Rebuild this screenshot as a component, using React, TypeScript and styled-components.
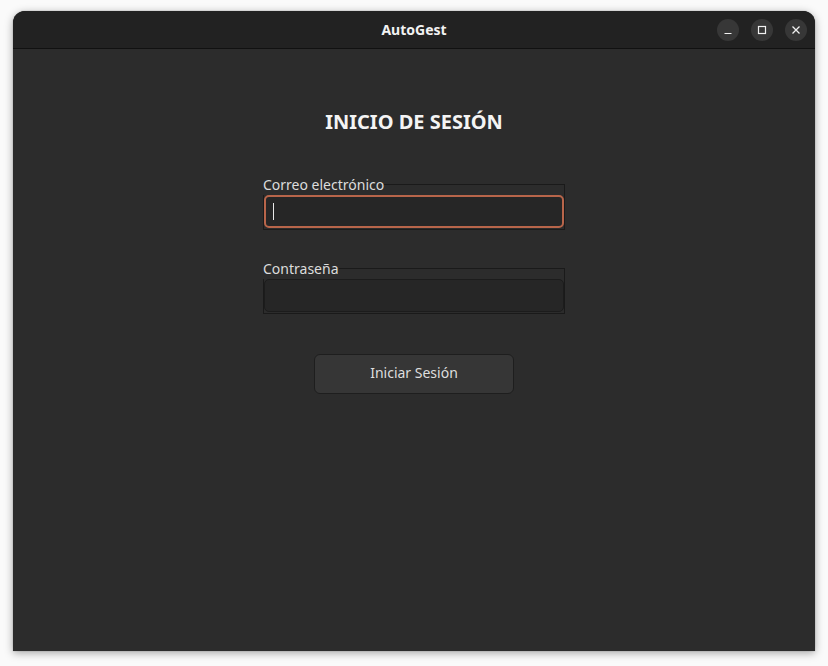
import React from 'react';
import styled, { createGlobalStyle } from 'styled-components';

const GlobalStyle = createGlobalStyle`
  html, body {
    margin: 0;
    padding: 0;
    background: #fafafa;
  }
  body {
    font-family: "Noto Sans", "Open Sans", sans-serif;
  }
`;

const Desktop = styled.div`
  width: 828px;
  height: 666px;
  padding: 11px 13px 0 13px;
  box-sizing: border-box;
`;

const Window = styled.div`
  width: 802px;
  height: 640px;
  display: flex;
  flex-direction: column;
  border-radius: 12px 12px 0 0;
  overflow: hidden;
  background: #2c2c2c;
  box-shadow: 0 2px 8px rgba(0, 0, 0, 0.35), 0 0 1px rgba(0, 0, 0, 0.5);
`;

const TitleBar = styled.div`
  height: 37px;
  flex-shrink: 0;
  display: grid;
  grid-template-columns: 1fr auto 1fr;
  align-items: center;
  background: #222222;
  border-bottom: 1px solid #111111;
`;

const Title = styled.div`
  grid-column: 2;
  color: #f2f2f2;
  font-size: 14px;
  font-weight: 700;
`;

const Controls = styled.div`
  grid-column: 3;
  justify-self: end;
  display: flex;
  gap: 12px;
  padding-right: 8px;
`;

const CtrlButton = styled.div`
  width: 22px;
  height: 22px;
  border-radius: 50%;
  background: #373737;
  display: flex;
  align-items: center;
  justify-content: center;
  color: #f0f0f0;
`;

const Content = styled.div`
  flex: 1;
  display: flex;
  flex-direction: column;
  align-items: center;
  padding-top: 61px;
`;

const Heading = styled.h1`
  margin: 0;
  height: 24px;
  line-height: 24px;
  font-size: 20px;
  font-weight: 700;
  color: #f4f4f4;
`;

const Field = styled.fieldset<{ $top: number }>`
  margin: ${p => p.$top}px 0 0 0;
  padding: 0 0 1px 0;
  width: 302px;
  box-sizing: border-box;
  border: 1px solid #1a1a1a;
  min-width: 0;
`;

const Legend = styled.legend`
  padding: 0;
  margin: 0 0 0 -1px;
  height: 21px;
  line-height: 21px;
  font-size: 14px;
  color: #dcdcdc;
`;

const InputBox = styled.div<{ $focused?: boolean }>`
  height: 33px;
  box-sizing: border-box;
  border-radius: 5px;
  background: #262626;
  border: ${p => (p.$focused ? '2px solid #b8654a' : '1px solid #1c1c1c')};
  display: flex;
  align-items: center;
  padding-left: ${p => (p.$focused ? '7px' : '8px')};
`;

const Caret = styled.span`
  width: 1px;
  height: 17px;
  background: #e8e8e8;
`;

const SubmitButton = styled.button`
  margin-top: 40px;
  width: 200px;
  height: 40px;
  box-sizing: border-box;
  padding: 0 0 3px 0;
  border-radius: 6px;
  border: 1px solid #1e1e1e;
  background: #363636;
  color: #dedede;
  font-family: "Noto Sans", "Open Sans", sans-serif;
  font-size: 14px;
`;

export default function App() {
  return (
    <>
      <GlobalStyle />
      <Desktop>
        <Window>
          <TitleBar>
            <Title>AutoGest</Title>
            <Controls>
              <CtrlButton>
                <svg width="10" height="10" viewBox="0 0 10 10">
                  <path d="M1.5 8.5h7" stroke="currentColor" strokeWidth="1.2" />
                </svg>
              </CtrlButton>
              <CtrlButton>
                <svg width="10" height="10" viewBox="0 0 10 10">
                  <rect x="1.5" y="1.5" width="7" height="7" fill="none" stroke="currentColor" strokeWidth="1.2" />
                </svg>
              </CtrlButton>
              <CtrlButton>
                <svg width="10" height="10" viewBox="0 0 10 10">
                  <path d="M1.5 1.5l7 7M8.5 1.5l-7 7" stroke="currentColor" strokeWidth="1.3" />
                </svg>
              </CtrlButton>
            </Controls>
          </TitleBar>
          <Content>
            <Heading>INICIO DE SESIÓN</Heading>
            <Field $top={40}>
              <Legend>Correo electrónico</Legend>
              <InputBox $focused>
                <Caret />
              </InputBox>
            </Field>
            <Field $top={28}>
              <Legend>Contraseña</Legend>
              <InputBox />
            </Field>
            <SubmitButton>Iniciar Sesión</SubmitButton>
          </Content>
        </Window>
      </Desktop>
    </>
  );
}
